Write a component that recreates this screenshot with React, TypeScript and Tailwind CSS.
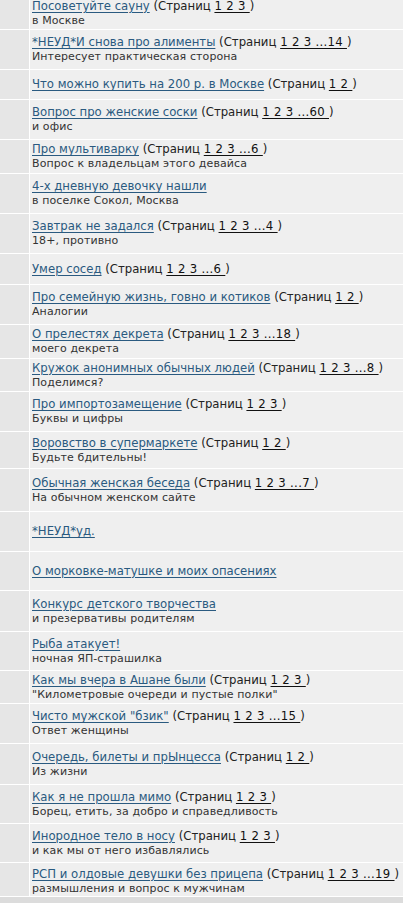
import React from "react";

type Topic = {
  title: string;
  pages?: string;
  desc?: string;
  h: string;
};

const topics: Topic[] = [
  { title: "Посоветуйте сауну", pages: "1 2 3 ", desc: "в Москве", h: "h-[29px] pb-[3px]" },
  { title: "*НЕУД*И снова про алименты", pages: "1 2 3 ...14 ", desc: "Интересует практическая сторона", h: "h-[39px]" },
  { title: "Что можно купить на 200 р. в Москве", pages: "1 2 ", h: "h-[29px]" },
  { title: "Вопрос про женские соски", pages: "1 2 3 ...60 ", desc: "и офис", h: "h-[39px]" },
  { title: "Про мультиварку", pages: "1 2 3 ...6 ", desc: "Вопрос к владельцам этого девайса", h: "h-[33px]" },
  { title: "4-х дневную девочку нашли", desc: "в поселке Сокол, Москва", h: "h-[39px]" },
  { title: "Завтрак не задался", pages: "1 2 3 ...4 ", desc: "18+, противно", h: "h-[39px]" },
  { title: "Умер сосед", pages: "1 2 3 ...6 ", h: "h-[30px]" },
  { title: "Про семейную жизнь, говно и котиков", pages: "1 2 ", desc: "Аналогии", h: "h-[39px]" },
  { title: "О прелестях декрета", pages: "1 2 3 ...18 ", desc: "моего декрета", h: "h-[33px]" },
  { title: "Кружок анонимных обычных людей", pages: "1 2 3 ...8 ", desc: "Поделимся?", h: "h-[32px]" },
  { title: "Про импортозамещение", pages: "1 2 3 ", desc: "Буквы и цифры", h: "h-[39px]" },
  { title: "Воровство в супермаркете", pages: "1 2 ", desc: "Будьте бдительны!", h: "h-[36px]" },
  { title: "Обычная женская беседа", pages: "1 2 3 ...7 ", desc: "На обычном женском сайте", h: "h-[42px]" },
  { title: "*НЕУД*уд.", h: "h-[39px]" },
  { title: "О морковке-матушке и моих опасениях", h: "h-[38px]" },
  { title: "Конкурс детского творчества", desc: "и презервативы родителям", h: "h-[40px]" },
  { title: "Рыба атакует!", desc: "ночная ЯП-страшилка", h: "h-[38px]" },
  { title: "Как мы вчера в Ашане были", pages: "1 2 3 ", desc: "\"Километровые очереди и пустые полки\"", h: "h-[32px]" },
  { title: "Чисто мужской \"бзик\"", pages: "1 2 3 ...15 ", desc: "Ответ женщины", h: "h-[39px]" },
  { title: "Очередь, билеты и прЫнцесса", pages: "1 2 ", desc: "Из жизни", h: "h-[40px]" },
  { title: "Как я не прошла мимо", pages: "1 2 3 ", desc: "Борец, етить, за добро и справедливость", h: "h-[38px]" },
  { title: "Инородное тело в носу", pages: "1 2 3 ", desc: "и как мы от него избавлялись", h: "h-[38px]" },
  { title: "РСП и олдовые девушки без прицепа", pages: "1 2 3 ...19 ", desc: "размышления и вопрос к мужчинам", h: "h-[33px] pt-[3px]" },
];

function TopicRow({ t }: { t: Topic }) {
  return (
    <div className="flex border-b border-white">
      <div className="w-[30px] shrink-0 border-r border-white bg-[#e6e6e6]" />
      <div className={`flex min-w-0 flex-1 flex-col justify-center bg-[#efefef] pl-[2px] ${t.h}`}>
        <div className="whitespace-nowrap text-[11.7px] leading-[15px] text-[#222]">
          <a href="#" className="text-[#2a5a80] underline decoration-1 underline-offset-[2px]">
            {t.title}
          </a>
          {t.pages && (
            <>
              {" (Страниц "}
              <span className="whitespace-pre tracking-[0.3px] text-[#111] underline decoration-1 underline-offset-[2px]">
                {t.pages}
              </span>
              {")"}
            </>
          )}
        </div>
        {t.desc && (
          <div className="whitespace-nowrap text-[11px] leading-[14px] tracking-[0.1px] text-[#333]">
            {t.desc}
          </div>
        )}
      </div>
    </div>
  );
}

export default function App() {
  return (
    <div
      className="h-[903px] w-[403px] overflow-hidden bg-[#dcdcdc]"
      style={{ fontFamily: '"DejaVu Sans", Verdana, sans-serif' }}
    >
      {topics.map((t, i) => (
        <TopicRow key={i} t={t} />
      ))}
    </div>
  );
}
